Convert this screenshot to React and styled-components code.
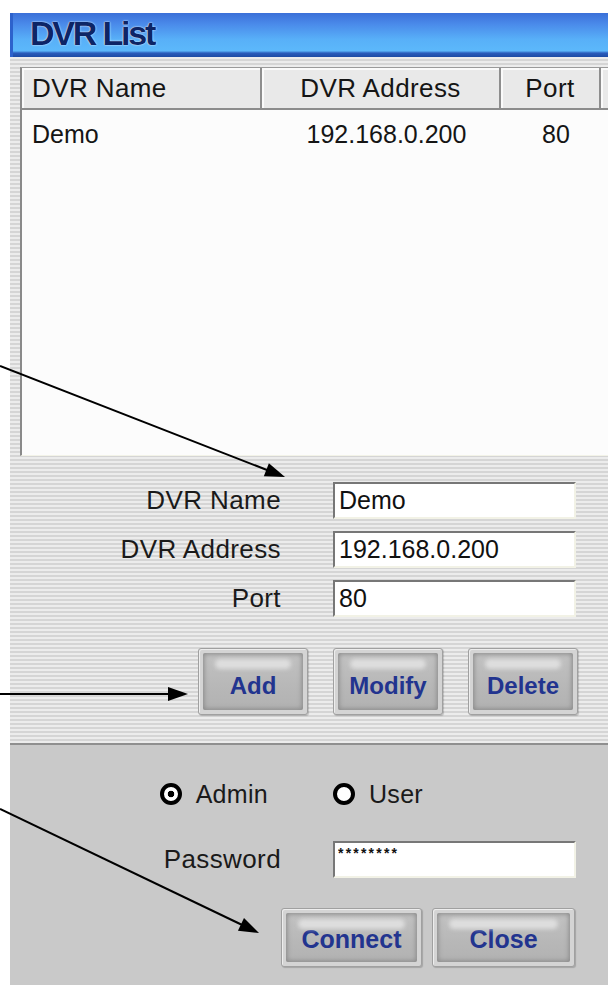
import React from "react";
import styled, { createGlobalStyle } from "styled-components";

const GlobalStyle = createGlobalStyle`
  html, body {
    margin: 0;
    padding: 0;
    background: #fff;
  }
  body {
    font-family: "Liberation Sans", Arial, sans-serif;
    color: #151515;
  }
`;

const Page = styled.div`
  position: relative;
  width: 608px;
  height: 985px;
  overflow: hidden;
  box-sizing: border-box;
  padding: 13px 0 0 10px;
`;

const Window = styled.div`
  display: flex;
  flex-direction: column;
  width: 598px;
  height: 972px;
`;

const TitleBar = styled.div`
  height: 44px;
  flex: none;
  box-sizing: border-box;
  display: flex;
  align-items: center;
  padding: 0 0 4px 17px;
  border-left: 3px solid #2d62cc;
  background: linear-gradient(
    to bottom,
    #3b70d8 0%,
    #4a8aea 25%,
    #58b0f8 60%,
    #5cb8fb 86%,
    #2a5cbc 91%,
    #1c4aa4 100%
  );
`;

const Title = styled.h1`
  margin: 0;
  font-size: 34px;
  font-weight: 700;
  letter-spacing: -2.2px;
  color: #0d2566;
  text-shadow: 0 0 2px #d6ebff, 0 0 1px #fff;
`;

const Striped = styled.div`
  flex: none;
  height: 688px;
  box-sizing: border-box;
  padding: 10px 0 0 10px;
  border-bottom: 2px solid #8f8f8f;
  background: repeating-linear-gradient(
    to bottom,
    #ececec 0px,
    #ececec 2px,
    #d5d5d5 2px,
    #d5d5d5 4px
  );
`;

const ListView = styled.div`
  height: 389px;
  box-sizing: border-box;
  border-left: 2px solid #8a8a8a;
  border-top: 1px solid #9a9a9a;
  border-bottom: 1px solid #f3f3e8;
  background: #fcfcfc;
`;

const columns = "240px 239px 100px 1fr";

const HeaderRow = styled.div`
  display: grid;
  grid-template-columns: ${columns};
  height: 42px;
  box-sizing: border-box;
  background: #e9e9e9;
  border-bottom: 2px solid #8c8c8c;
`;

const HeaderCell = styled.div`
  display: flex;
  align-items: center;
  justify-content: ${(p) => (p.$center ? "center" : "flex-start")};
  padding-left: ${(p) => (p.$center ? 0 : 10)}px;
  border-right: 2px solid #8e8e8e;
  box-shadow: inset 2px 2px 0 #fafafa;
  font-size: 26px;
  letter-spacing: 0.4px;
  white-space: nowrap;
  overflow: hidden;
`;

const DataRow = styled.div`
  display: grid;
  grid-template-columns: ${columns};
  height: 40px;
  padding-top: 4px;
  align-items: center;
`;

const DataCell = styled.div`
  padding-left: 10px;
  text-align: ${(p) => (p.$center ? "center" : "left")};
  font-size: 25px;
  white-space: nowrap;
`;

const FieldGrid = styled.div`
  display: grid;
  grid-template-columns: 261px 243px;
  grid-auto-rows: 37px;
  column-gap: 52px;
  row-gap: 12px;
  align-items: center;
  margin-top: ${(p) => p.$top || 0}px;
`;

const FieldLabel = styled.label`
  justify-self: end;
  font-size: 26px;
  letter-spacing: 0.4px;
  color: #1a1a1a;
`;

const TextBox = styled.input`
  width: 100%;
  height: 37px;
  box-sizing: border-box;
  margin: 0;
  padding: 0 4px;
  border-style: solid;
  border-width: 2px;
  border-color: #777 #f2f2e6 #f2f2e6 #777;
  background: #fff;
  font-family: "Liberation Sans", Arial, sans-serif;
  font-size: 25px;
  color: #111;
  outline: none;
`;

const SecretBox = styled(TextBox)`
  padding: 0 3px 14px;
  font-size: 14px;
  font-weight: 700;
  letter-spacing: 2.2px;
`;

const ButtonRow = styled.div`
  display: flex;
  gap: ${(p) => p.$gap}px;
  margin-top: ${(p) => p.$top}px;
  padding-left: ${(p) => p.$left || 0}px;
  justify-content: ${(p) => (p.$end ? "flex-end" : "flex-start")};
  padding-right: ${(p) => p.$right || 0}px;
`;

const Bevel = styled.button`
  width: ${(p) => p.$w}px;
  height: ${(p) => p.$h}px;
  flex: none;
  padding: 4px;
  margin: 0;
  border: 1px solid #a0a0a0;
  border-radius: 3px;
  background: #d4d4d4;
  box-shadow: 1px 1px 1px rgba(0, 0, 0, 0.18), inset 1px 1px 0 #ededed;
  font-family: "Liberation Sans", Arial, sans-serif;
  cursor: pointer;
`;

const Face = styled.span`
  position: relative;
  display: flex;
  align-items: flex-end;
  justify-content: center;
  height: 100%;
  box-sizing: border-box;
  padding-bottom: ${(p) => p.$pb}px;
  border-radius: 2px;
  background: linear-gradient(to bottom, #c2c2c2, #b7b7b7 60%, #b2b2b2);
  box-shadow: inset 0 0 5px 1px #888;
  color: #22348f;
  font-size: ${(p) => p.$size}px;
  font-weight: 700;

  &::before {
    content: "";
    position: absolute;
    top: 6px;
    left: 12px;
    right: 12px;
    height: 10px;
    border-radius: 5px;
    background: #dedede;
    filter: blur(2px);
  }
`;

const LoginPanel = styled.div`
  flex: 1;
  box-sizing: border-box;
  padding: 34px 0 0 10px;
  background: #c9c9c9;
`;

const RadioRow = styled.div`
  display: grid;
  grid-template-columns: 261px 243px;
  column-gap: 52px;
  height: 30px;
  align-items: center;
`;

const RadioOption = styled.label`
  display: flex;
  align-items: center;
  gap: 14px;
  justify-self: ${(p) => (p.$end ? "end" : "start")};
  margin-right: ${(p) => (p.$end ? 13 : 0)}px;
  font-size: 25px;
  letter-spacing: 0.3px;
  color: #1a1a1a;
`;

const RadioDot = styled.span`
  width: 22px;
  height: 22px;
  box-sizing: border-box;
  border: 4px solid #000;
  border-radius: 50%;
  background: ${(p) =>
    p.$on ? "radial-gradient(circle, #000 0 3px, #fff 3.6px)" : "#fff"};
`;

const Pointers = styled.svg`
  position: absolute;
  top: 0;
  left: 0;
  pointer-events: none;
`;

const pointers = [
  { from: [0, 366], to: [285, 477] },
  { from: [0, 694], to: [188, 694] },
  { from: [0, 809], to: [259, 933] },
];

function arrowGeometry(from, to, len = 20, half = 7) {
  const dx = to[0] - from[0];
  const dy = to[1] - from[1];
  const d = Math.hypot(dx, dy);
  const ux = dx / d;
  const uy = dy / d;
  const bx = to[0] - ux * len;
  const by = to[1] - uy * len;
  return {
    base: [bx + ux * 2, by + uy * 2],
    head: `${to[0]},${to[1]} ${bx - uy * half},${by + ux * half} ${bx + uy * half},${by - ux * half}`,
  };
}

function Arrows() {
  return (
    <Pointers width="608" height="985" viewBox="0 0 608 985">
      {pointers.map((p, i) => {
        const g = arrowGeometry(p.from, p.to);
        return (
          <g key={i}>
            <line
              x1={p.from[0]}
              y1={p.from[1]}
              x2={g.base[0]}
              y2={g.base[1]}
              stroke="#000"
              strokeWidth="2"
            />
            <polygon points={g.head} fill="#000" />
          </g>
        );
      })}
    </Pointers>
  );
}

const dvrs = [{ name: "Demo", address: "192.168.0.200", port: "80" }];

export default function App() {
  return (
    <Page>
      <GlobalStyle />
      <Window>
        <TitleBar>
          <Title>DVR List</Title>
        </TitleBar>

        <Striped>
          <ListView>
            <HeaderRow>
              <HeaderCell>DVR Name</HeaderCell>
              <HeaderCell $center>DVR Address</HeaderCell>
              <HeaderCell $center>Port</HeaderCell>
              <HeaderCell />
            </HeaderRow>
            {dvrs.map((d) => (
              <DataRow key={d.name}>
                <DataCell>{d.name}</DataCell>
                <DataCell $center>{d.address}</DataCell>
                <DataCell $center>{d.port}</DataCell>
                <DataCell />
              </DataRow>
            ))}
          </ListView>

          <FieldGrid $top={26}>
            <FieldLabel htmlFor="dvr-name">DVR Name</FieldLabel>
            <TextBox id="dvr-name" defaultValue="Demo" />
            <FieldLabel htmlFor="dvr-address">DVR Address</FieldLabel>
            <TextBox id="dvr-address" defaultValue="192.168.0.200" />
            <FieldLabel htmlFor="dvr-port">Port</FieldLabel>
            <TextBox id="dvr-port" defaultValue="80" />
          </FieldGrid>

          <ButtonRow $top={31} $left={178} $gap={25}>
            <Bevel $w={110} $h={67}>
              <Face $pb={10} $size={24}>Add</Face>
            </Bevel>
            <Bevel $w={110} $h={67}>
              <Face $pb={10} $size={24}>Modify</Face>
            </Bevel>
            <Bevel $w={110} $h={67}>
              <Face $pb={10} $size={24}>Delete</Face>
            </Bevel>
          </ButtonRow>
        </Striped>

        <LoginPanel>
          <RadioRow>
            <RadioOption $end>
              <RadioDot $on />
              Admin
            </RadioOption>
            <RadioOption>
              <RadioDot />
              User
            </RadioOption>
          </RadioRow>

          <FieldGrid $top={32}>
            <FieldLabel htmlFor="password">Password</FieldLabel>
            <SecretBox id="password" defaultValue="********" />
          </FieldGrid>

          <ButtonRow $top={30} $gap={10} $end $right={33}>
            <Bevel $w={141} $h={59}>
              <Face $pb={8} $size={25}>Connect</Face>
            </Bevel>
            <Bevel $w={143} $h={59}>
              <Face $pb={8} $size={25}>Close</Face>
            </Bevel>
          </ButtonRow>
        </LoginPanel>
      </Window>
      <Arrows />
    </Page>
  );
}
